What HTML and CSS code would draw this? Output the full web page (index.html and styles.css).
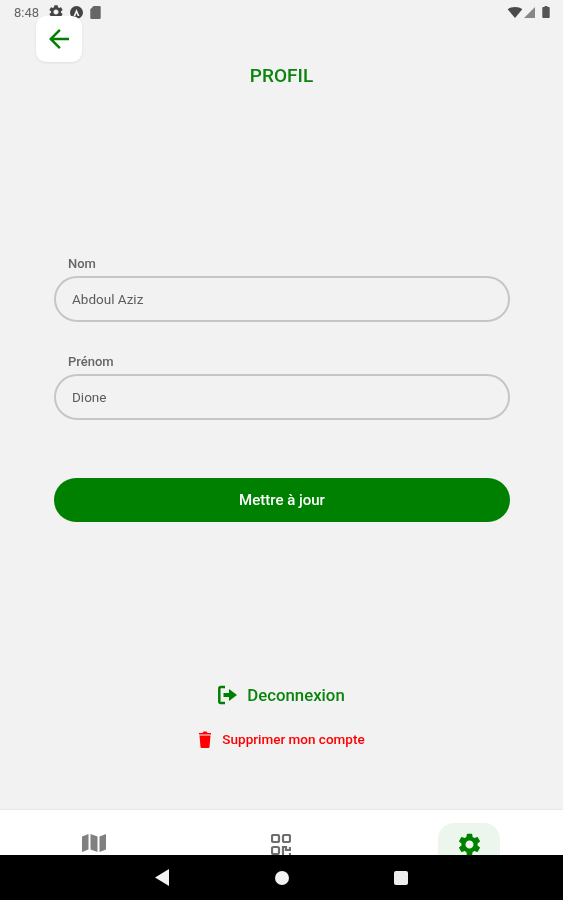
FILE: index.html
```html
<!DOCTYPE html>
<html lang="fr">
  <head>
    <meta charset="UTF-8" />
    <meta name="viewport" content="width=device-width, initial-scale=1.0" />
    <title>Profil</title>
    <link rel="stylesheet" href="styles.css">
  </head>
  <body>
    <div class="screen">
      <div class="status-bar">
        <span class="clock">8:48</span>
        <svg class="status-icon gear" viewBox="2 2 20 20"><path d="M19.14 12.94c.04-.3.06-.61.06-.94 0-.32-.02-.64-.07-.94l2.03-1.58c.18-.14.23-.41.12-.61l-1.92-3.32c-.12-.22-.37-.29-.59-.22l-2.39.96c-.5-.38-1.03-.7-1.62-.94l-.36-2.54c-.04-.24-.24-.41-.48-.41h-3.84c-.24 0-.43.17-.47.41l-.36 2.54c-.59.24-1.13.57-1.62.94l-2.39-.96c-.22-.08-.47 0-.59.22L2.74 8.87c-.12.21-.08.47.12.61l2.03 1.58c-.05.3-.09.63-.09.94s.02.64.07.94l-2.03 1.58c-.18.14-.23.41-.12.61l1.92 3.32c.12.22.37.29.59.22l2.39-.96c.5.38 1.03.7 1.62.94l.36 2.54c.05.24.24.41.48.41h3.84c.24 0 .44-.17.47-.41l.36-2.54c.59-.24 1.13-.56 1.62-.94l2.39.96c.22.08.47 0 .59-.22l1.92-3.32c.12-.22.07-.47-.12-.61l-2.01-1.58zM12 15.6c-1.98 0-3.6-1.62-3.6-3.6s1.62-3.6 3.6-3.6 3.6 1.62 3.6 3.6-1.62 3.6-3.6 3.6z"/></svg>
        <svg class="status-icon" viewBox="1 1 22 22"><path fill-rule="evenodd" d="M12 1a11 11 0 1 0 0 22 11 11 0 0 0 0-22zM12 6l5 12h-3l-2-5-2 5H7z"/></svg>
        <svg class="status-icon sd" viewBox="4 2 16 20"><path d="M9 2h9a2 2 0 0 1 2 2v16a2 2 0 0 1-2 2H6a2 2 0 0 1-2-2V7z"/></svg>
        <span class="status-spacer"></span>
        <svg class="wifi" viewBox="0 0 16 12"><path d="M0 2.5C2 .9 5 0 8 0s6 .9 8 2.5L8 12z"/></svg>
        <svg class="signal" viewBox="0 0 12 12"><path d="M12 0v12H0z"/></svg>
        <svg class="battery" viewBox="0 0 8 13"><path d="M2.5 0h3v1H7a1 1 0 0 1 1 1v10a1 1 0 0 1-1 1H1a1 1 0 0 1-1-1V2a1 1 0 0 1 1-1h1.500z"/></svg>
      </div>

      <main class="content">
        <div class="back">
          <svg viewBox="0 0 24 24"><path d="M20 11H7.830l5.590-5.590L12 4l-8 8 8 8 1.410-1.410L7.830 13H20v-2z"/></svg>
        </div>
        <h1 class="title">PROFIL</h1>

        <form class="form">
          <div class="field">
            <label class="field-label">Nom</label>
            <div class="input">Abdoul Aziz</div>
          </div>
          <div class="field">
            <label class="field-label">Prénom</label>
            <div class="input">Dione</div>
          </div>
          <div class="submit">Mettre à jour</div>
        </form>

        <div class="actions">
          <div class="logout">
            <svg viewBox="0 0 20 20">
              <path class="bracket" d="M7 2H2.800A1.500 1.500 0 0 0 1.300 3.500v13A1.500 1.500 0 0 0 2.800 18H7"/>
              <path d="M5.500 8H11V4l8 6-8 6v-4H5.500z"/>
            </svg>
            <span>Deconnexion</span>
          </div>
          <div class="delete">
            <svg viewBox="0 0 14 18"><path d="M1 4.500V3h3.500l1-1.500h3l1 1.500H13v1.500zM1.500 5.500h11l-1 11.500a1 1 0 0 1-1 1h-7a1 1 0 0 1-1-1z"/></svg>
            <span>Supprimer mon compte</span>
          </div>
        </div>
      </main>

      <nav class="tabs">
        <div class="tab">
          <svg class="tab-icon map" viewBox="0 0 24 18">
            <path d="M0 2.500L6.500 0v15.500L0 18zM8.500 0l7 2.500V18l-7-2.500zM17.500 2.500L24 0v15.500L17.500 18z"/>
          </svg>
        </div>
        <div class="tab">
          <svg class="tab-icon qr" viewBox="0 0 20 22">
            <rect x="1" y="1" width="7" height="7" rx="1.500"/>
            <rect x="12" y="1" width="7" height="7" rx="1.500"/>
            <rect x="1" y="13" width="7" height="7" rx="1.500"/>
            <path d="M12 21v-8h3v3h4v-3M19 19v2"/>
          </svg>
        </div>
        <div class="tab tab-current">
          <div class="tab-active">
            <svg viewBox="0 0 24 24"><path d="M19.14 12.94c.04-.3.06-.61.06-.94 0-.32-.02-.64-.07-.94l2.03-1.58c.18-.14.23-.41.12-.61l-1.92-3.32c-.12-.22-.37-.29-.59-.22l-2.39.96c-.5-.38-1.03-.7-1.62-.94l-.36-2.54c-.04-.24-.24-.41-.48-.41h-3.84c-.24 0-.43.17-.47.41l-.36 2.54c-.59.24-1.13.57-1.62.94l-2.39-.96c-.22-.08-.47 0-.59.22L2.74 8.87c-.12.21-.08.47.12.61l2.03 1.58c-.05.3-.09.63-.09.94s.02.64.07.94l-2.03 1.58c-.18.14-.23.41-.12.61l1.92 3.32c.12.22.37.29.59.22l2.39-.96c.5.38 1.03.7 1.62.94l.36 2.54c.05.24.24.41.48.41h3.84c.24 0 .44-.17.47-.41l.36-2.54c.59-.24 1.13-.56 1.62-.94l2.39.96c.22.08.47 0 .59-.22l1.92-3.32c.12-.22.07-.47-.12-.61l-2.01-1.58zM12 15.600c-1.980 0-3.600-1.620-3.600-3.600s1.620-3.600 3.600-3.600 3.600 1.620 3.600 3.600-1.620 3.600-3.600 3.600z"/></svg>
          </div>
        </div>
      </nav>

      <div class="system-nav">
        <svg class="sys-back" viewBox="0 0 14 17"><path d="M14 0v17L0 8.500z"/></svg>
        <span class="sys-home"></span>
        <span class="sys-recent"></span>
      </div>
    </div>
  </body>
</html>
```

FILE: styles.css
```css
html,
body {
  margin: 0;
  padding: 0;
}

body {
  background-color: #f2f2f2;
  font-family: "Roboto", "Liberation Sans", sans-serif;
  overflow: hidden;
}

/* the capture is soft, so the whole screen is blurred a little */
.screen {
  display: flex;
  flex-direction: column;
  height: 900px;
  filter: blur(0.5px);
}

.status-bar {
  display: flex;
  align-items: center;
  height: 24px;
  padding: 0 13px 0 14px;
  color: #666;
  font-size: 13px;
}

.clock {
  margin-right: 10px;
}

.status-icon {
  width: 13px;
  height: 13px;
  margin-right: 7px;
  fill: #444;
}

.gear {
  width: 14px;
  height: 14px;
}

.sd {
  width: 11px;
  fill: #666;
}

.status-spacer {
  flex: 1;
}

.wifi {
  width: 16px;
  height: 11px;
  fill: #4a4a4a;
}

.signal {
  width: 11px;
  height: 11px;
  margin: 0 7px 0 1px;
  fill: #888;
}

.battery {
  width: 8px;
  height: 12px;
  fill: #555;
}

.content {
  flex: 1;
  display: flex;
  flex-direction: column;
  min-height: 0;
}

.back {
  display: flex;
  align-items: center;
  justify-content: center;
  width: 46px;
  height: 46px;
  margin: -8px 0 0 36px;
  background-color: #fff;
  border-radius: 10px;
  box-shadow: 0 1px 3px rgba(0, 0, 0, 0.08);
}

.back svg {
  width: 30px;
  height: 30px;
  fill: #008000;
}

.title {
  margin: 3px 0 0;
  color: #0a840a;
  font-size: 19px;
  font-weight: 500;
  line-height: 22px;
  text-align: center;
}

.form {
  display: flex;
  flex-direction: column;
  gap: 33px;
  margin: 170px 53px 0 54px;
}

.field-label {
  display: block;
  margin: 0 0 6px 14px;
  color: #666;
  font-size: 13px;
  font-weight: 500;
  line-height: 13px;
}

.input {
  display: flex;
  align-items: center;
  height: 46px;
  padding-left: 16px;
  box-sizing: border-box;
  border: 2px solid #c6c6c6;
  border-radius: 23px;
  color: #5c5c5c;
  font-size: 13.5px;
}

.submit {
  display: flex;
  align-items: center;
  justify-content: center;
  height: 44px;
  margin-top: 25px;
  background-color: #008000;
  border-radius: 23px;
  color: #fff;
  font-size: 15px;
  font-weight: 500;
}

.actions {
  display: flex;
  flex-direction: column;
  align-items: center;
  gap: 22px;
  margin-top: 162px;
}

.logout,
.delete {
  display: flex;
  align-items: center;
  height: 22px;
}

.logout {
  color: #0a840a;
  font-size: 16.8px;
  font-weight: 500;
}

.logout svg {
  width: 20px;
  height: 20px;
  margin-right: 9px;
  fill: #008000;
}

.bracket {
  fill: none;
  stroke: #008000;
  stroke-width: 2.500;
}

.delete {
  color: #f00;
  font-size: 13.5px;
  font-weight: 500;
}

.delete svg {
  width: 14px;
  height: 18px;
  margin-right: 10px;
  fill: #f00;
}

.tabs {
  display: grid;
  grid-template-columns: repeat(3, 1fr);
  height: 45px;
  background-color: #fff;
  border-top: 1px solid #e8e8e8;
  overflow: hidden;
}

.tab {
  display: flex;
  justify-content: center;
  padding-top: 24px;
}

.tab-current {
  padding-top: 13px;
}

.tab-icon {
  flex: none;
}

.map {
  width: 24px;
  height: 18px;
  fill: #808080;
}

.qr {
  width: 20px;
  height: 22px;
  fill: none;
  stroke: #6e6e6e;
  stroke-width: 2.200;
}

.tab-active {
  display: flex;
  justify-content: center;
  flex: none;
  width: 62px;
  height: 50px;
  padding-top: 8px;
  box-sizing: border-box;
  background-color: #edf6ed;
  border-radius: 16px;
}

.tab-active svg {
  width: 27px;
  height: 27px;
  fill: #008000;
}

.system-nav {
  display: flex;
  align-items: center;
  justify-content: space-between;
  height: 45px;
  padding: 0 155px;
  background-color: #000;
}

.sys-back {
  width: 14px;
  height: 17px;
  fill: #f2f2f2;
}

.sys-home {
  width: 14px;
  height: 14px;
  background-color: #f2f2f2;
  border-radius: 50%;
}

.sys-recent {
  width: 14px;
  height: 14px;
  background-color: #eee;
  border-radius: 2px;
}
```
